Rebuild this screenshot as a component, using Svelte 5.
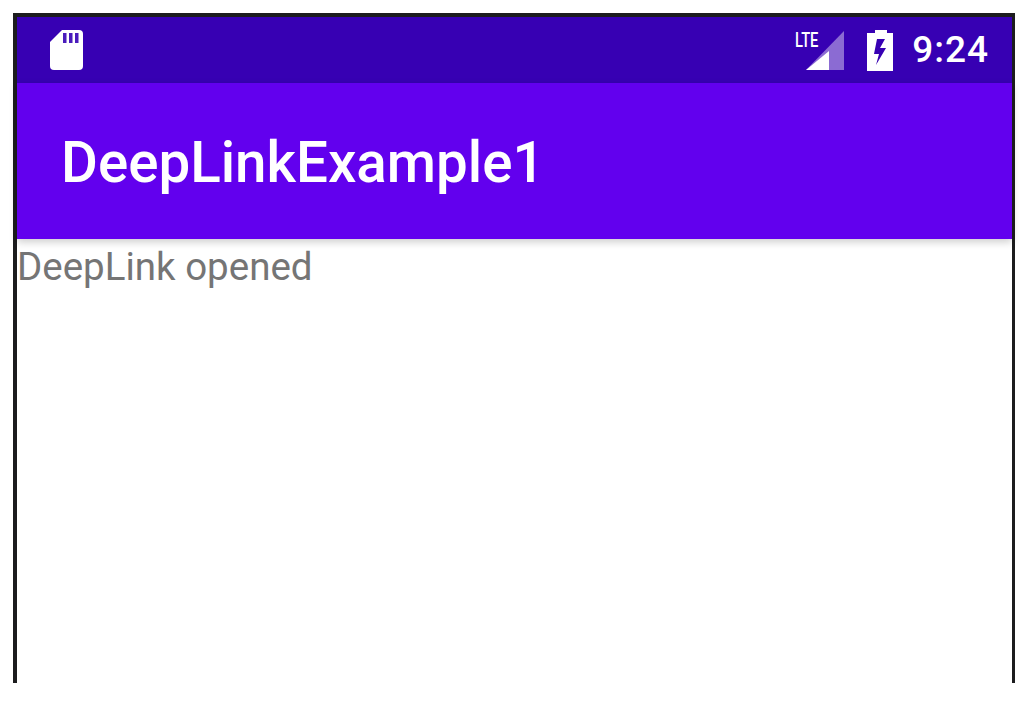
<script>
  const title = 'DeepLinkExample1'
  const message = 'DeepLink opened'
</script>

<div class="page">
  <div class="phone">
    <div class="statusbar">
      <svg class="sdcard" viewBox="0 0 34 40" width="34" height="40">
        <path d="M12 0H29a4 4 0 0 1 4 4V36a4 4 0 0 1-4 4H4a4 4 0 0 1-4-4V12Z" fill="#fff" />
        <rect x="13" y="3" width="3.5" height="10" fill="#4a1cbc" />
        <rect x="19" y="3" width="3.5" height="10" fill="#4a1cbc" />
        <rect x="25" y="3" width="3.5" height="10" fill="#4a1cbc" />
      </svg>
      <div class="status-right">
        <div class="signal">
          <span class="lte">LTE</span>
          <svg viewBox="0 0 38 39" width="38" height="39">
            <path d="M38 0V39H0Z" fill="#fff" fill-opacity="0.42" />
            <path d="M23 20V39H0Z" fill="#fff" />
          </svg>
        </div>
        <svg class="battery" viewBox="0 0 26 41" width="26" height="41">
          <path fill-rule="evenodd" fill="#fff" d="M8 0H20V3H26V41H0V3H8ZM10 9L7 24H12L9 35L19 18H13L18 9Z" />
        </svg>
        <span class="clock">9:24</span>
      </div>
    </div>
    <header class="appbar">{title}</header>
    <main class="content">{message}</main>
  </div>
</div>

<style>
  :global(body) {
    background: #fff;
  }
  .page {
    height: 711px;
    padding: 13px 9px 28px 13px;
    box-sizing: border-box;
  }
  .phone {
    height: 100%;
    box-sizing: border-box;
    border: solid #1c1c1e;
    border-width: 4px 3px 0 4px;
    display: flex;
    flex-direction: column;
    font-family: Roboto, sans-serif;
  }
  .statusbar {
    height: 66px;
    flex: none;
    background: #3700b3;
    display: flex;
    align-items: center;
    justify-content: space-between;
    padding: 0 23px 0 33px;
    color: #fff;
  }
  .sdcard {
    margin-top: -1px;
  }
  .status-right {
    display: flex;
    align-items: center;
  }
  .signal {
    position: relative;
    width: 38px;
    height: 39px;
    margin-top: 1px;
    margin-right: 23px;
  }
  .lte {
    position: absolute;
    left: -11px;
    top: -3px;
    font-size: 21px;
    line-height: 24px;
    font-weight: 500;
    transform: scaleX(0.7);
    transform-origin: left;
  }
  .battery {
    margin-right: 19px;
  }
  .clock {
    font-size: 37px;
    line-height: 40px;
    font-weight: 500;
    letter-spacing: 1px;
  }
  .appbar {
    height: 156px;
    flex: none;
    box-sizing: border-box;
    background: #6200ee;
    color: #fff;
    font-size: 56.5px;
    font-weight: 500;
    line-height: 161px;
    padding-left: 44px;
    box-shadow: 0 3px 8px rgba(0, 0, 0, 0.2);
    position: relative;
  }
  .content {
    flex: 1;
    background: #fff;
    color: #757575;
    font-size: 38.5px;
    line-height: 55px;
  }
</style>
